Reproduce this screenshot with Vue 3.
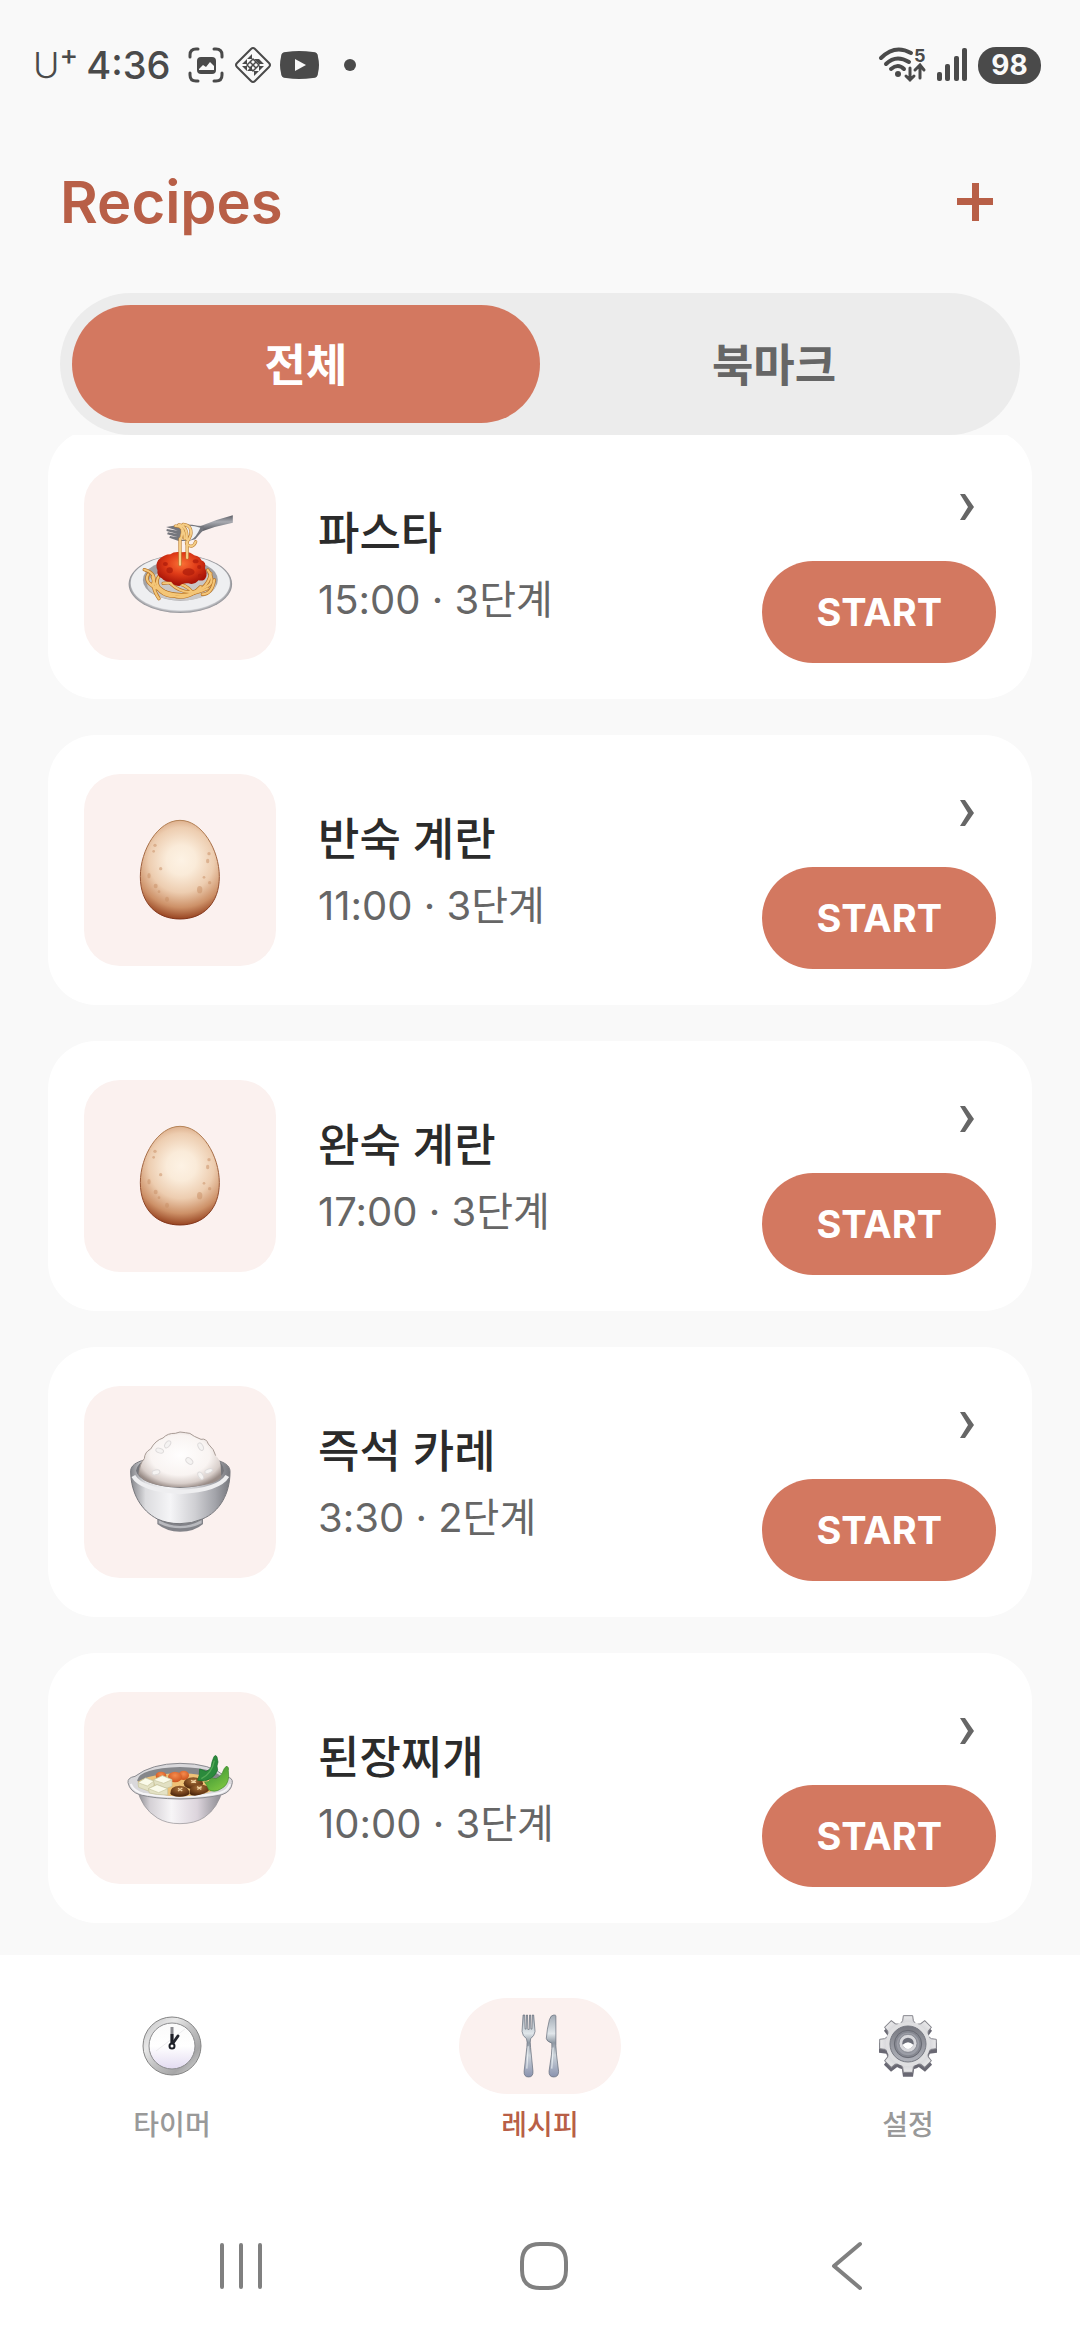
<template>
  <div class="app">
    <div class="status-bar">
      <div class="status-left">
        <span class="carrier">U<sup>+</sup></span>
        <span class="clock">4:36</span>
        <svg class="capture-icon" width="36" height="36" viewBox="0 0 36 36" fill="none">
          <path
            d="M2 10V8Q2 2 8 2H10M26 2H28Q34 2 34 8V10M34 26V28Q34 34 28 34H26M10 34H8Q2 34 2 28V26"
            stroke="#4a4a4a"
            stroke-width="3"
            stroke-linecap="round"
          />
          <rect x="9" y="10" width="19" height="17" rx="4" fill="#4a4a4a" />
          <path d="M11 22L15 18L18 20L22 15L26 19V23H11Z" fill="#f9f9f9" />
        </svg>
        <svg class="diamond-icon" width="38" height="38" viewBox="0 0 38 38">
          <path
            d="M17 3Q19 1 21 3L35 17Q37 19 35 21L21 35Q19 37 17 35L3 21Q1 19 3 17Z"
            fill="none"
            stroke="#4a4a4a"
            stroke-width="2"
          />
          <path
            d="M18 8V13H13ZM20 13H25V18ZM25 18V13L30 18ZM25 20H30L25 25ZM20 25H25L20 30ZM13 25H18V20ZM8 20H13V25ZM13 13V18H8Z"
            fill="#4a4a4a"
          />
          <path
            d="M19 13L25 19L19 25L13 19ZM16 16L22 22M22 16L16 22"
            fill="none"
            stroke="#4a4a4a"
            stroke-width="1.5"
          />
        </svg>
        <svg class="video-icon" width="39" height="28" viewBox="0 0 39 28">
          <path
            d="M6 1Q19 -1 33 1Q38 1 38 6Q40 14 38 22Q38 27 33 27Q19 29 6 27Q1 27 1 22Q-1 14 1 6Q1 1 6 1Z"
            fill="#4a4a4a"
          />
          <path d="M15 8L26 14L15 20Z" fill="#f9f9f9" />
        </svg>
        <span class="dot"></span>
      </div>
      <div class="status-right">
        <svg width="50" height="52" viewBox="0 -8 50 52" fill="none" stroke="#4a4a4a">
          <g stroke-width="4" stroke-linecap="round">
            <path d="M3 11Q17 -3 33 6" />
            <path d="M8 17Q18 7 31 15" />
            <path d="M13 22Q20 16 26 22" />
          </g>
          <circle cx="20" cy="27" r="3" fill="#4a4a4a" stroke="none" />
          <path
            d="M32 21V33M28 29L32 33L36 29M42 31V19M37 23L42 18L46 23"
            stroke-width="3"
            stroke-linecap="round"
          />
          <text class="wifi-band" x="36" y="15">5</text>
        </svg>
        <svg class="signal-icon" width="32" height="36" viewBox="0 0 32 36">
          <g fill="#4a4a4a">
            <rect x="1" y="25" width="5" height="9" rx="2" />
            <rect x="9" y="17" width="5" height="17" rx="2" />
            <rect x="18" y="9" width="5" height="25" rx="2" />
            <rect x="26" y="1" width="5" height="33" rx="2" />
          </g>
        </svg>
        <span class="battery">98</span>
      </div>
    </div>

    <header class="header">
      <h1>Recipes</h1>
      <button class="add-button" type="button" aria-label="Add">
        <svg width="36" height="38" viewBox="0 0 36 38">
          <path d="M15 0H22V15H36V22H22V38H15V22H0V15H15Z" fill="#b85f47" />
        </svg>
      </button>
    </header>

    <div class="tabs">
      <button
        v-for="tab in tabs"
        :key="tab"
        type="button"
        class="tab"
        :class="{ active: tab === activeTab }"
        @click="activeTab = tab"
      >
        {{ tab }}
      </button>
    </div>

    <main class="recipes">
      <ul class="recipe-list">
        <li v-for="recipe in recipes" :key="recipe.name" class="card">
          <div class="thumb">
            <svg
              v-if="recipe.icon === 'pasta'"
              viewBox="123 114 538 576"
              preserveAspectRatio="none"
            >
              <defs>
                <radialGradient id="plate">
                  <stop offset="0.7" stop-color="#f2f2f4" />
                  <stop offset="0.9" stop-color="#e2e3e6" />
                  <stop offset="1" stop-color="#8c8d92" />
                </radialGradient>
                <radialGradient id="sauce" cx="0.5" cy="0.35" r="0.6">
                  <stop offset="0" stop-color="#fb7136" />
                  <stop offset="0.5" stop-color="#e03c18" />
                  <stop offset="1" stop-color="#a81408" />
                </radialGradient>
                <linearGradient id="handle" x2="0" y2="1">
                  <stop offset="0" stop-color="#5d5f66" />
                  <stop offset="0.4" stop-color="#a9abb1" />
                  <stop offset="1" stop-color="#505259" />
                </linearGradient>
              </defs>
              <ellipse cx="393" cy="462" rx="145" ry="87" fill="url(#plate)" />
              <ellipse cx="393" cy="459" rx="139" ry="82" fill="#eeeff1" />
              <ellipse cx="393" cy="450" rx="105" ry="62" fill="#a2a2a5" />
              <ellipse cx="396" cy="464" rx="96" ry="47" fill="#c9c7c6" />
              <g fill="none" stroke-linecap="round">
                <g stroke="#b87427" stroke-width="10">
                  <path d="M292 419Q328 430 316 462Q320 486 333 506M303 433Q290 455 325 475M306 460Q380 520 470 475" />
                  <path d="M315 440Q330 510 400 497Q470 485 478 430M330 470Q400 530 450 470M345 460Q400 450 430 490Q390 515 350 485" />
                  <path d="M488 450Q482 492 455 493M470 420Q494 460 462 472Q410 505 365 460M340 430Q310 460 352 492" />
                </g>
                <g stroke="#f4c677" stroke-width="6">
                  <path d="M292 419Q328 430 316 462Q320 486 333 506M303 433Q290 455 325 475M306 460Q380 520 470 475" />
                  <path d="M315 440Q330 510 400 497Q470 485 478 430M330 470Q400 530 450 470M345 460Q400 450 430 490Q390 515 350 485" />
                  <path d="M488 450Q482 492 455 493M470 420Q494 460 462 472Q410 505 365 460M340 430Q310 460 352 492" />
                </g>
              </g>
              <path
                d="M331 390Q347 373 365 373Q376 363 396 367Q418 362 432 376Q448 379 452 391Q467 398 462 414Q470 432 464 443Q460 454 444 451Q432 466 416 460Q399 458 390 468Q376 468 367 455Q350 457 341 445Q326 438 329 421Q322 406 331 390Z"
                fill="url(#sauce)"
              />
              <g fill="#b21e0c" opacity="0.8">
                <ellipse cx="351" cy="402" rx="7" ry="6" />
                <ellipse cx="363" cy="421" rx="9" ry="9" />
                <ellipse cx="416" cy="426" rx="17" ry="11" />
                <ellipse cx="436" cy="394" rx="8" ry="6" />
                <circle cx="446" cy="411" r="6" />
                <circle cx="448" cy="437" r="6" />
              </g>
              <path d="M448 289Q495 268 540 256V278Q492 288 450 305Z" fill="url(#handle)" />
              <path
                d="M353 291Q405 278 442 287L459 288L457 301Q444 316 435 328Q415 336 386 332L362 323L364 318L386 322L356 313L358 307L386 312L354 303L355 297L386 302Z"
                fill="#74767d"
              />
              <path d="M401 289Q424 284 449 293Q437 323 422 330Q400 332 390 326Z" fill="#eef0f3" />
              <g fill="none" stroke-linecap="round">
                <g stroke="#b7792f" stroke-width="9">
                  <path d="M379 288Q404 286 405 326M389 284Q414 288 411 328M401 283Q427 286 422 315Q417 330 410 338" />
                  <path d="M392 326V404M412 338V384M411 343Q428 357 436 335M394 328Q400 310 398 300" />
                </g>
                <g stroke="#f5cd86" stroke-width="6">
                  <path d="M379 288Q404 286 405 326M389 284Q414 288 411 328M401 283Q427 286 422 315Q417 330 410 338" />
                  <path d="M392 326V404M412 338V384M411 343Q428 357 436 335M394 328Q400 310 398 300" />
                </g>
              </g>
            </svg>

            <svg v-else-if="recipe.icon === 'egg'" viewBox="42 42 576 576">
              <defs>
                <radialGradient
                  id="shell"
                  gradientUnits="userSpaceOnUse"
                  cx="334"
                  cy="300"
                  r="178"
                >
                  <stop offset="0" stop-color="#fdf2e4" />
                  <stop offset="0.25" stop-color="#faebd9" />
                  <stop offset="0.55" stop-color="#edcdb0" />
                  <stop offset="0.8" stop-color="#cd9168" />
                  <stop offset="1" stop-color="#96421f" />
                </radialGradient>
                <linearGradient id="shellEdge" x2="0" y2="1">
                  <stop offset="0" stop-color="#b58458" />
                  <stop offset="1" stop-color="#82351b" />
                </linearGradient>
              </defs>
              <path
                d="M330 181C396 181 448 270 448 350C448 430 400 477 330 477C260 477 211 430 211 350C211 270 264 181 330 181Z"
                fill="url(#shell)"
                stroke="url(#shellEdge)"
                stroke-width="3"
              />
              <g fill="#c98f65" opacity="0.5">
                <circle cx="255" cy="256" r="5" />
                <circle cx="251" cy="274" r="4" />
                <circle cx="272" cy="326" r="5" />
                <ellipse cx="237" cy="347" rx="5" ry="8" />
                <ellipse cx="257" cy="378" rx="6" ry="7" />
                <circle cx="267" cy="395" r="4" />
                <ellipse cx="291" cy="418" rx="6" ry="8" />
                <ellipse cx="389" cy="389" rx="8" ry="11" />
                <circle cx="402" cy="352" r="4" />
                <circle cx="419" cy="368" r="5" />
                <ellipse cx="413" cy="303" rx="5" ry="7" />
                <circle cx="417" cy="281" r="5" />
              </g>
            </svg>

            <svg v-else-if="recipe.icon === 'rice'" viewBox="42 48 576 576">
              <defs>
                <linearGradient id="bowl">
                  <stop offset="0" stop-color="#85868b" />
                  <stop offset="0.15" stop-color="#dcdcdf" />
                  <stop offset="0.4" stop-color="#f5f5f7" />
                  <stop offset="0.65" stop-color="#cfcfd3" />
                  <stop offset="0.85" stop-color="#a3a4aa" />
                  <stop offset="1" stop-color="#77787e" />
                </linearGradient>
                <radialGradient id="rice" cx="0.5" cy="0.42" r="0.6">
                  <stop offset="0" stop-color="#fffefe" />
                  <stop offset="0.6" stop-color="#f9f4f2" />
                  <stop offset="0.85" stop-color="#d8ceca" />
                  <stop offset="1" stop-color="#9a8d88" />
                </radialGradient>
              </defs>
              <path d="M262 440V462Q290 485 330 485Q374 485 399 462V440Z" fill="#828389" />
              <path d="M266 450Q330 486 395 450V460Q330 490 266 460Z" fill="#b8b9be" />
              <path
                d="M182 306C180 278 220 260 330 260C440 260 482 278 480 306C480 370 450 425 397 447Q366 461 330 461Q292 461 262 447C214 422 183 370 182 306Z"
                fill="url(#bowl)"
                stroke="#77787d"
                stroke-width="3"
              />
              <path
                d="M198 302Q202 280 225 270H440Q459 279 462 302Q452 345 330 354Q208 345 198 302Z"
                fill="#76767b"
              />
              <path
                d="M207 314Q208 281 223 266Q224 246 242 237Q256 211 279 204Q293 189 316 190Q329 183 346 188Q360 187 373 199L393 208Q409 204 415 222Q433 238 437 257Q449 266 452 286L454 321Q438 348 330 352Q224 348 207 314Z"
                fill="url(#rice)"
              />
              <path
                d="M207 314Q208 281 223 266Q224 246 242 237Q256 211 279 204Q293 189 316 190Q329 183 346 188Q360 187 373 199L393 208Q409 204 415 222Q433 238 437 257"
                fill="none"
                stroke="#a99c96"
                stroke-width="3"
              />
              <g fill="#f5f3f2" stroke="#dedbdb" stroke-width="3">
                <ellipse cx="269" cy="242" rx="12" ry="7" transform="rotate(18 269 242)" />
                <ellipse cx="293" cy="223" rx="12" ry="7" transform="rotate(-52 293 223)" />
                <ellipse cx="392" cy="230" rx="12" ry="7" transform="rotate(62 392 230)" />
                <ellipse cx="358" cy="273" rx="12" ry="8" transform="rotate(42 358 273)" />
                <ellipse cx="258" cy="307" rx="12" ry="7" transform="rotate(-15 258 307)" />
                <ellipse cx="392" cy="317" rx="12" ry="7" transform="rotate(60 392 317)" />
                <ellipse cx="416" cy="303" rx="12" ry="6" transform="rotate(-22 416 303)" />
              </g>
              <path d="M190 318Q214 360 330 366Q447 360 472 318" fill="none" stroke="#eeeef0" stroke-width="13" />
            </svg>

            <svg v-else viewBox="42 36 576 576">
              <defs>
                <linearGradient id="pot">
                  <stop offset="0" stop-color="#87878c" />
                  <stop offset="0.15" stop-color="#d4d0d5" />
                  <stop offset="0.4" stop-color="#f7f5f7" />
                  <stop offset="0.7" stop-color="#dcd4dc" />
                  <stop offset="1" stop-color="#87868c" />
                </linearGradient>
                <radialGradient id="mushroom" cx="0.5" cy="0.3" r="0.7">
                  <stop offset="0" stop-color="#a8703a" />
                  <stop offset="0.6" stop-color="#74431c" />
                  <stop offset="1" stop-color="#4a250c" />
                </radialGradient>
                <radialGradient id="carrot" cx="0.5" cy="0.35" r="0.7">
                  <stop offset="0" stop-color="#f58b4d" />
                  <stop offset="1" stop-color="#c94f1a" />
                </radialGradient>
                <linearGradient id="leaf" x2="0.6" y2="1">
                  <stop offset="0" stop-color="#2f8a34" />
                  <stop offset="1" stop-color="#7cc541" />
                </linearGradient>
              </defs>
              <path
                d="M201 325Q215 385 262 414Q290 431 330 431Q374 431 403 412Q444 385 459 325Z"
                fill="url(#pot)"
                stroke="#8c8b90"
                stroke-width="2"
              />
              <path
                d="M174 308Q172 293 195 289Q244 251 330 250Q423 250 466 290Q489 292 487 308Q484 335 456 344Q405 356 330 357Q252 356 209 344Q180 335 174 308Z"
                fill="#d9d8db"
                stroke="#8b8b90"
                stroke-width="3"
              />
              <path d="M182 312Q192 334 219 341Q330 361 450 339Q475 331 480 312" fill="none" stroke="#f6f5f7" stroke-width="6" />
              <path d="M202 301Q207 265 330 261Q454 265 458 301Q450 343 330 350Q215 343 202 301Z" fill="#85868a" />
              <path d="M203 305Q245 280 330 280Q416 280 456 309Q440 344 330 350Q219 343 203 305Z" fill="#efc277" />
              <g fill="url(#carrot)">
                <ellipse cx="273" cy="287" rx="16" ry="12" />
                <ellipse cx="341" cy="286" rx="16" ry="14" />
                <ellipse cx="315" cy="291" rx="21" ry="16" />
              </g>
              <g stroke="#c5c39b" stroke-width="2">
                <path d="M204 308L227 294L252 303V322L235 333L206 322Z" fill="#e4e2c5" />
                <path d="M204 308L227 294L252 303L232 318Z" fill="#fafaea" />
                <path d="M250 300L277 287L306 299V319L286 326L254 315Z" fill="#e2e0c3" />
                <path d="M250 300L277 287L306 299L281 310Z" fill="#fafaea" />
                <path d="M235 326L261 314L293 326V345Q260 345 238 339Z" fill="#e4e2c5" />
                <path d="M235 326L261 314L293 326L266 338Z" fill="#fafaea" />
              </g>
              <g fill="url(#mushroom)">
                <ellipse cx="370" cy="310" rx="29" ry="18" />
                <path d="M301 341Q299 318 329 317Q359 318 358 342Q350 350 328 350Q306 349 301 341Z" />
                <path d="M359 342Q356 314 388 313Q418 315 417 331Q408 343 375 347Q363 347 359 342Z" />
              </g>
              <path
                d="M363 301L378 308M378 300L364 308M324 325L337 333M337 324L324 333M381 320L394 328M395 320L382 328"
                stroke="#efcf9f"
                stroke-width="4"
              />
              <path
                d="M383 301Q389 288 389 267L398 270L408 274Q420 270 423 261Q425 246 431 232Q436 222 441 231L444 246L441 258L443 270Q437 286 422 296Q405 307 383 301Z"
                fill="#2b8a3c"
                stroke="#176b29"
                stroke-width="2"
              />
              <path d="M394 296Q425 282 433 242" fill="none" stroke="#55a957" stroke-width="4" />
              <path
                d="M404 306Q417 309 425 294L438 296Q453 290 457 278Q463 262 470 258Q478 262 475 272L476 290Q474 317 452 327Q434 339 416 329Q411 316 404 306Z"
                fill="url(#leaf)"
                stroke="#3c8a2b"
                stroke-width="2"
              />
            </svg>
          </div>

          <div class="info">
            <h2>{{ recipe.name }}</h2>
            <p>{{ recipe.time }} · {{ recipe.steps }}단계</p>
          </div>

          <div class="actions">
            <button class="detail-button" type="button" :aria-label="recipe.name">
              <svg width="14" height="26" viewBox="0 0 14 26">
                <path d="M0 0H5L14 13L5 26H0L8 13Z" fill="#666" />
              </svg>
            </button>
            <button class="start-button" type="button">START</button>
          </div>
        </li>
      </ul>
    </main>

    <nav class="bottom-nav">
      <a
        v-for="item in navItems"
        :key="item.label"
        href="#"
        class="nav-item"
        :class="{ active: item.label === activeNav }"
        @click.prevent="activeNav = item.label"
      >
        <span class="nav-icon">
          <svg v-if="item.icon === 'timer'" width="60" height="60" viewBox="0 0 60 60">
            <defs>
              <linearGradient id="rim" x2="1" y2="1">
                <stop offset="0" stop-color="#bcbcbe" />
                <stop offset="0.3" stop-color="#e8e8e8" />
                <stop offset="0.5" stop-color="#c4c4c5" />
                <stop offset="0.75" stop-color="#a6a6a7" />
                <stop offset="1" stop-color="#dedede" />
              </linearGradient>
              <linearGradient id="face" x2="0" y2="1">
                <stop offset="0" stop-color="#fafafa" />
                <stop offset="0.5" stop-color="#fff" />
                <stop offset="1" stop-color="#e3dbf1" />
              </linearGradient>
            </defs>
            <circle cx="30" cy="30" r="29" fill="url(#rim)" stroke="#858585" />
            <circle cx="30" cy="30" r="23" fill="url(#face)" stroke="#8c8c8e" />
            <path d="M14 35L43 13" stroke="#ececee" />
            <path d="M30 11V28" stroke="#8b8b90" stroke-width="3" />
            <path d="M30 18V28" stroke="#1d1f27" stroke-width="3" />
            <path d="M31 27L36 20" stroke="#24262e" stroke-width="3" stroke-linecap="round" />
            <circle cx="30" cy="30" r="2.5" fill="#fff" stroke="#1d1f27" stroke-width="2" />
          </svg>
          <svg
            v-else-if="item.icon === 'cutlery'"
            width="41"
            height="64"
            viewBox="1215 162 120 191"
            preserveAspectRatio="none"
          >
            <defs>
              <linearGradient id="steel" x2="0" y2="1">
                <stop offset="0" stop-color="#a2abb5" />
                <stop offset="0.3" stop-color="#e0e6ea" />
                <stop offset="0.45" stop-color="#8f98a3" />
                <stop offset="0.65" stop-color="#cdd4da" />
                <stop offset="1" stop-color="#8992ae" />
              </linearGradient>
            </defs>
            <g fill="url(#steel)" stroke="#606976" stroke-width="2">
              <path
                d="M1224 165H1229L1230 207H1233L1234 165H1237L1238 208H1242L1243 165H1246L1247 207H1250L1251 165H1255L1259 214Q1258 226 1246 236Q1244 244 1246 262L1253 333Q1254 350 1240 350Q1226 350 1227 333L1235 262Q1237 244 1234 236Q1222 227 1221 214Z"
              />
              <path
                d="M1320 167V257L1322 284L1328 333Q1328 350 1314 350Q1299 350 1300 333L1307 284Q1309 263 1308 249Q1292 243 1292 235Q1294 207 1301 179Q1305 165 1314 165Q1320 165 1320 167Z"
              />
            </g>
            <path d="M1239 258L1235 325M1312 262L1308 325" stroke="#e8edf1" stroke-width="3" />
          </svg>
          <svg v-else width="60" height="64" viewBox="231 162 180 192">
            <defs>
              <linearGradient id="gear" x2="0" y2="1">
                <stop offset="0" stop-color="#e9e9ea" />
                <stop offset="1" stop-color="#d5d5d9" />
              </linearGradient>
              <linearGradient id="well" x2="0" y2="1">
                <stop offset="0" stop-color="#777880" />
                <stop offset="1" stop-color="#b1b3bb" />
              </linearGradient>
            </defs>
            <g fill="#696873">
              <circle cx="321" cy="262" r="68" />
              <path
                v-for="angle in gearAngles"
                :key="angle"
                d="M301 210L306 176H336L341 210Z"
                :transform="`rotate(${angle} 321 263)`"
              />
            </g>
            <g fill="url(#gear)" stroke="#85858c" stroke-width="3">
              <path
                v-for="angle in gearAngles"
                :key="angle"
                d="M299 190L305 182L307 167H335L337 182L343 190Z"
                :transform="`rotate(${angle} 321 252)`"
              />
            </g>
            <circle cx="321" cy="252" r="67" fill="#dfdfe1" />
            <circle cx="321" cy="252" r="54" fill="url(#well)" stroke="#777982" stroke-width="3" />
            <circle cx="321" cy="252" r="41" fill="#858790" stroke="#686a73" stroke-width="3" />
            <circle cx="321" cy="252" r="34" fill="#9b9da6" />
            <circle cx="321" cy="250" r="27" fill="#d8d8dc" stroke="#73757e" stroke-width="2" />
            <circle cx="321" cy="250" r="17" fill="#6c6e78" />
            <path d="M305 254Q321 239 337 254Q332 267 321 267Q309 266 305 254Z" fill="#fff" />
          </svg>
        </span>
        <span class="nav-label">{{ item.label }}</span>
      </a>
    </nav>

    <div class="system-nav">
      <button type="button" aria-label="Recents">
        <svg width="48" height="50" viewBox="0 0 48 50">
          <path d="M5 4V46M24 4V46M43 4V46" stroke="#808080" stroke-width="4" stroke-linecap="round" />
        </svg>
      </button>
      <button type="button" aria-label="Home">
        <svg width="50" height="50" viewBox="0 0 50 50">
          <path
            d="M25 3H29Q47 3 47 21V29Q47 47 29 47H21Q3 47 3 29V21Q3 3 21 3Z"
            fill="none"
            stroke="#808080"
            stroke-width="4"
          />
        </svg>
      </button>
      <button type="button" aria-label="Back">
        <svg width="50" height="50" viewBox="0 0 50 50">
          <path
            d="M38 3L12 25L38 47"
            fill="none"
            stroke="#808080"
            stroke-width="4"
            stroke-linecap="round"
            stroke-linejoin="round"
          />
        </svg>
      </button>
    </div>
  </div>
</template>

<script setup>
import { ref } from 'vue';

const tabs = ['전체', '북마크'];
const activeTab = ref('전체');

const recipes = [
  { name: '파스타', time: '15:00', steps: 3, icon: 'pasta' },
  { name: '반숙 계란', time: '11:00', steps: 3, icon: 'egg' },
  { name: '완숙 계란', time: '17:00', steps: 3, icon: 'egg' },
  { name: '즉석 카레', time: '3:30', steps: 2, icon: 'rice' },
  { name: '된장찌개', time: '10:00', steps: 3, icon: 'stew' },
];

const navItems = [
  { label: '타이머', icon: 'timer' },
  { label: '레시피', icon: 'cutlery' },
  { label: '설정', icon: 'settings' },
];
const activeNav = ref('레시피');

const gearAngles = [0, 45, 90, 135, 180, 225, 270, 315];
</script>

<style>
body {
  margin: 0;
  background: #f9f9f9;
}
</style>

<style scoped>
.app {
  display: flex;
  flex-direction: column;
  height: 100vh;
  background: #f9f9f9;
  color: #2b2b2b;
  font-family: Inter, 'Noto Sans CJK KR', sans-serif;
}

button {
  display: flex;
  align-items: center;
  justify-content: center;
  padding: 0;
  border: none;
  background: none;
  color: inherit;
  font: inherit;
  cursor: pointer;
}

svg {
  display: block;
}

.status-bar {
  display: flex;
  align-items: center;
  justify-content: space-between;
  flex-shrink: 0;
  height: 130px;
  padding: 0 39px 0 33px;
  color: #4a4a4a;
}

.status-left,
.status-right {
  display: flex;
  align-items: center;
}

.carrier {
  display: flex;
  font-size: 36px;
  font-weight: 300;
  line-height: 40px;
}

.carrier sup {
  font-size: 28px;
  font-weight: 500;
  line-height: 20px;
}

.clock {
  margin-left: 8px;
  font-size: 38px;
  font-weight: 500;
  line-height: 40px;
}

.capture-icon {
  margin-left: 18px;
}

.diamond-icon {
  margin-left: 10px;
}

.video-icon {
  margin-left: 8px;
}

.dot {
  width: 12px;
  height: 12px;
  margin-left: 25px;
  border-radius: 50%;
  background: #4a4a4a;
}

.wifi-band {
  fill: #4a4a4a;
  stroke: none;
  font-size: 18px;
  font-weight: 700;
}

.signal-icon {
  margin: 0 10px 0 8px;
}

.battery {
  width: 63px;
  border-radius: 18px;
  background: #4a4a4a;
  color: #f9f9f9;
  font-size: 28px;
  font-weight: 700;
  line-height: 37px;
  text-align: center;
}

.header {
  display: flex;
  align-items: center;
  justify-content: space-between;
  flex-shrink: 0;
  height: 144px;
  padding: 0 60px;
  color: #b85f47;
}

.header h1 {
  margin: 0;
  font-size: 58px;
  font-weight: 600;
}

.add-button {
  width: 90px;
  height: 90px;
}

.tabs {
  display: flex;
  flex-shrink: 0;
  margin: 19px 60px 0;
  padding: 12px;
  border-radius: 71px;
  background: #ececec;
}

.tab {
  flex: 1;
  height: 118px;
  padding-bottom: 4px;
  border-radius: 59px;
  color: #666;
  font-size: 45px;
  font-weight: 700;
}

.tab.active {
  background: #d37860;
  color: #fff;
}

.recipes {
  flex: 1;
  min-height: 0;
  overflow: hidden;
}

.recipe-list {
  display: flex;
  flex-direction: column;
  gap: 36px;
  margin: -6px 0 0;
  padding: 0 48px;
  list-style: none;
}

.card {
  display: flex;
  align-items: center;
  padding: 36px;
  border-radius: 48px;
  background: #fff;
}

.thumb {
  width: 192px;
  height: 192px;
  border-radius: 36px;
  background: #fbf1ef;
}

.thumb svg {
  width: 100%;
  height: 100%;
}

.info {
  flex: 1;
  margin-left: 42px;
  padding-top: 6px;
}

.info h2 {
  margin: 0;
  font-size: 45px;
  font-weight: 500;
  line-height: 66px;
}

.info p {
  margin: 0;
  color: #666;
  font-size: 40px;
  line-height: 66px;
}

.actions {
  display: flex;
  flex-direction: column;
  align-items: flex-end;
  gap: 12px;
}

.detail-button {
  width: 58px;
  height: 84px;
}

.start-button {
  height: 102px;
  padding: 0 54px;
  border-radius: 51px;
  background: #d37860;
  color: #fff;
  font-size: 38px;
  font-weight: 700;
}

.bottom-nav {
  display: flex;
  justify-content: space-between;
  flex-shrink: 0;
  padding: 43px 91px 46px;
  background: #fff;
}

.nav-item {
  display: flex;
  flex-direction: column;
  align-items: center;
  gap: 10px;
  color: #999;
  text-decoration: none;
}

.nav-icon {
  display: flex;
  align-items: center;
  justify-content: center;
  width: 162px;
  height: 96px;
  border-radius: 48px;
}

.nav-label {
  font-size: 28px;
  font-weight: 500;
  line-height: 42px;
}

.nav-item.active {
  color: #b85f47;
}

.nav-item.active .nav-icon {
  background: #fbf1ef;
}

.system-nav {
  display: flex;
  align-items: center;
  justify-content: space-between;
  flex-shrink: 0;
  height: 148px;
  padding: 0 208px 0 217px;
  background: #fff;
}
</style>
